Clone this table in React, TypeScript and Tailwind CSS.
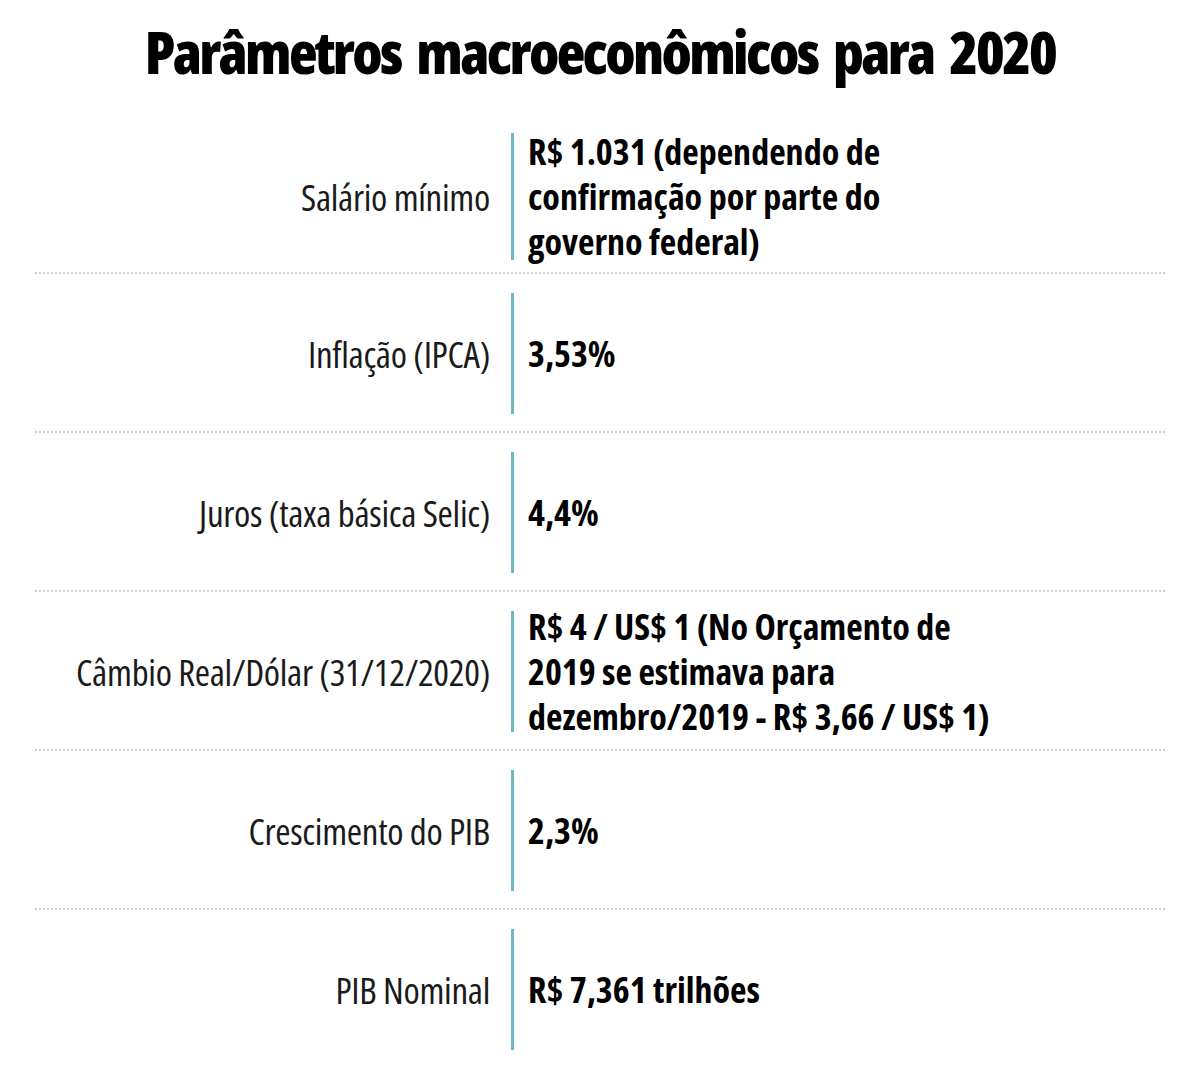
const rows = [
  { label: 'Inflação (IPCA)', value: ['3,53%'] },
  { label: 'Juros (taxa básica Selic)', value: ['4,4%'] },
  {
    label: 'Câmbio Real/Dólar (31/12/2020)',
    value: ['R$ 4 / US$ 1 (No Orçamento de', '2019 se estimava para', 'dezembro/2019 - R$ 3,66 / US$ 1)'],
  },
  { label: 'Crescimento do PIB', value: ['2,3%'] },
  { label: 'PIB Nominal', value: ['R$ 7,361 trilhões'] },
];

const Separator = () => <div className="mx-[35px] border-t-2 border-dotted border-[#cfcfcf]" />;

const Row = ({ label, value, heightClass }: { label: string; value: string[]; heightClass: string }) => (
  <div className={`flex items-center ${heightClass}`}>
    <div className="w-[490px] shrink-0 text-right text-[37px] leading-[44px] tracking-[-0.3px] text-[#1a1a1a]">
      {label}
    </div>
    <div className="ml-[21px] w-[3px] h-full shrink-0 bg-[#6db8c3]" />
    <div className="pl-[14px] text-[36px] leading-[45px] font-bold text-black whitespace-nowrap">
      {value.map((line) => (
        <div key={line}>{line}</div>
      ))}
    </div>
  </div>
);

export default function App() {
  return (
    <div className="w-[1200px] h-[1085px] overflow-hidden bg-white font-['Open_Sans',sans-serif] font-stretch-[75%]">
      {/* Title */}
      <h1 className="pt-[22px] text-center text-[59px] leading-none tracking-[-2.7px] [word-spacing:8px] font-extrabold text-black">
        Parâmetros macroeconômicos para 2020
      </h1>

      {/* First row */}
      <div className="mt-[52px] pb-[12px]">
        <Row
          label="Salário mínimo"
          value={['R$ 1.031 (dependendo de', 'confirmação por parte do', 'governo federal)']}
          heightClass="h-[127px]"
        />
      </div>

      {rows.map((row) => (
        <div key={row.label}>
          <Separator />
          <div className="pt-[19px] pb-[17px]">
            <Row label={row.label} value={row.value} heightClass="h-[121px]" />
          </div>
        </div>
      ))}
    </div>
  );
}
